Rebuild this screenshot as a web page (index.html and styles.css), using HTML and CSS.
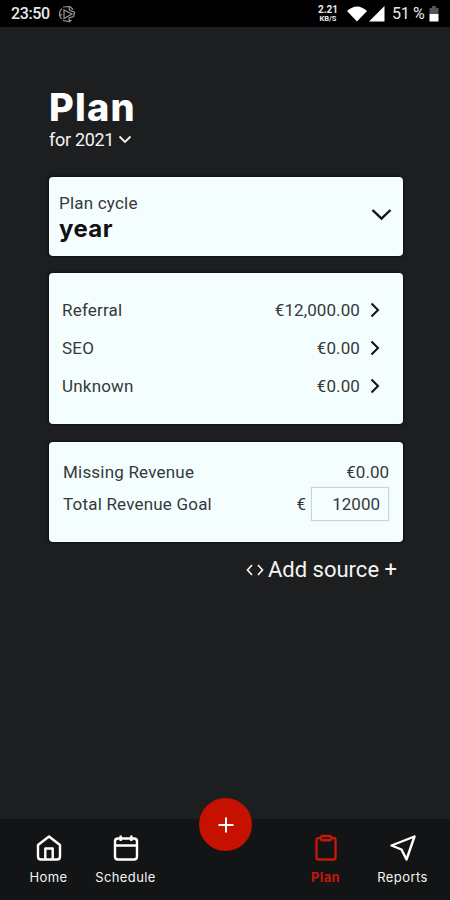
FILE: index.html
```html
<!DOCTYPE html>
<html lang="en">
<head>
  <meta charset="UTF-8" />
  <meta name="viewport" content="width=device-width, initial-scale=1.0"/>
  <title>Plan</title>
  <link rel="stylesheet" href="styles.css">
</head>
<body>
  <div class="app">
    <div class="status-bar">
      <span class="time">23:50</span>
      <svg class="status-app" width="18" height="18" viewBox="0 0 18 18"><path d="M5 2 12 1.500 15 4.500M16.500 7.500 15.500 12M13.500 15 11.500 16.500 5 15.500M3.500 14 1.500 10.500 2 6 4 3.500M6 5V13.500L14 9ZM11 2 11.500 5 17 7.500M1.500 10.500 4 9.500M11.500 16 11 13 15.500 11.500"/></svg>
      <div class="speed"><span>2.21</span><span>KB/S</span></div>
      <svg class="wifi" width="20" height="16" viewBox="0 0 20 16"><path d="M0 5Q10-4 20 5L10 15.500Z"/></svg>
      <svg class="signal" width="16" height="16" viewBox="0 0 16 16"><path d="M15.500 0V15.500H0Z"/></svg>
      <span class="percent">51 %</span>
      <svg class="battery" width="10" height="16" viewBox="0 0 10 16"><path fill="#555" d="M3 0h4v2h2.500v6h-9V2H3z"/><path fill="#fff" d="M.5 8h9v7.500h-9z"/></svg>
    </div>

    <div class="content">
      <h1>Plan</h1>
      <div class="period">
        <span>for 2021</span>
        <svg width="14" height="9" viewBox="0 0 14 9"><path d="M1.500 1.500 7 7 12.500 1.500"/></svg>
      </div>

      <div class="card cycle">
        <div>
          <div class="cycle-label">Plan cycle</div>
          <div class="cycle-value">year</div>
        </div>
        <svg width="21" height="14" viewBox="0 0 21 14"><path d="M1.500 2 10.500 10.500 19.500 2"/></svg>
      </div>

      <div class="card sources">
        <div class="source"><span class="name">Referral</span><span class="amount">€12,000.00</span><svg width="10" height="16" viewBox="0 0 10 16"><path d="M1.500 1.500 8 8 1.500 14.500"/></svg></div>
        <div class="source"><span class="name">SEO</span><span class="amount">€0.00</span><svg width="10" height="16" viewBox="0 0 10 16"><path d="M1.500 1.500 8 8 1.500 14.500"/></svg></div>
        <div class="source"><span class="name">Unknown</span><span class="amount">€0.00</span><svg width="10" height="16" viewBox="0 0 10 16"><path d="M1.500 1.500 8 8 1.500 14.500"/></svg></div>
      </div>

      <div class="card totals">
        <div class="total missing"><span class="name">Missing Revenue</span><span class="sum">€0.00</span></div>
        <div class="total goal"><span class="name">Total Revenue Goal</span><span class="currency">€</span><div class="goal-input">12000</div></div>
      </div>

      <div class="add-source">
        <svg width="18" height="12" viewBox="0 0 18 12"><path d="M6 1 1.500 6 6 11M12 1 16.500 6 12 11"/></svg>
        <span>Add source +</span>
      </div>
    </div>

    <div class="nav">
      <div class="nav-item home">
        <svg width="28" height="28" viewBox="0 0 28 28"><path d="M3 11 14 2.500 25 11V22.500Q25 25.500 22 25.500H6Q3 25.500 3 22.500ZM10.300 25.500V14.500H17.700V25.500"/></svg>
        <span>Home</span>
      </div>
      <div class="nav-item schedule">
        <svg width="28" height="28" viewBox="0 0 28 28"><path d="M6 4.500H22Q25 4.500 25 7.500V22.500Q25 25.500 22 25.500H6Q3 25.500 3 22.500V7.500Q3 4.500 6 4.500ZM3 11.500H25M8.700 1.500V7M19.300 1.500V7"/></svg>
        <span>Schedule</span>
      </div>
      <div class="nav-item plan active">
        <svg width="28" height="28" viewBox="0 0 28 28"><path d="M9 4H6.500Q4.500 4 4.500 6V23.500Q4.500 25.500 6.500 25.500H21.500Q23.500 25.500 23.500 23.500V6Q23.500 4 21.500 4H19M10.500 2H17.500Q19 2 19 3.500V4.700Q19 6.200 17.500 6.200H10.500Q9 6.200 9 4.700V3.500Q9 2 10.500 2Z"/></svg>
        <span>Plan</span>
      </div>
      <div class="nav-item reports">
        <svg width="28" height="28" viewBox="0 0 28 28"><path d="M25.500 2.500 2.500 11.500 12.500 15.500 17.500 25.500Z"/></svg>
        <span>Reports</span>
      </div>
      <div class="add-button">
        <svg width="18" height="18" viewBox="0 0 18 18"><path d="M9 1.500V16.500M1.500 9H16.500"/></svg>
      </div>
    </div>
  </div>
</body>
</html>
```

FILE: styles.css
```css
* {
  box-sizing: border-box;
}
body {
  margin: 0;
  font-family: Roboto, "Liberation Sans", sans-serif;
  background-color: #1c1e1f;
  color: #f4f4f4;
}
svg {
  display: block;
  flex: none;
  fill: none;
}
span {
  white-space: nowrap;
}
.app {
  height: 900px;
  display: flex;
  flex-direction: column;
  overflow: hidden;
}
.status-bar {
  height: 27px;
  flex: none;
  display: flex;
  align-items: center;
  padding: 0 10px 0 11px;
  background: #000;
  font-size: 16px;
  color: #e8e8e8;
}
.time {
  font-weight: 500;
  letter-spacing: -0.4px;
}
.status-app {
  margin-left: 8px;
  stroke: #999;
  stroke-width: 1.2;
}
.speed {
  margin-left: auto;
  width: 20px;
  display: flex;
  flex-direction: column;
  align-items: center;
  font-size: 10px;
  font-weight: bold;
  line-height: 10px;
}
.speed span + span {
  font-size: 7.5px;
  line-height: 8px;
}
.wifi {
  margin-left: 9px;
  fill: #fff;
}
.signal {
  margin-left: 2px;
  fill: #fff;
}
.percent {
  margin-left: 7px;
  width: 33px;
  letter-spacing: -0.3px;
}
.battery {
  margin-left: 4px;
  margin-right: 1px;
}
.speed,
.wifi,
.signal {
  position: relative;
}
.content {
  flex: 1;
  padding: 58px 47px 0 49px;
}
h1 {
  margin: 0;
  font-family: Inter, sans-serif;
  font-size: 38px;
  line-height: 44px;
  font-weight: 800;
  letter-spacing: 1.2px;
  color: #fff;
}
.period {
  display: flex;
  align-items: center;
  gap: 4px;
  height: 21px;
  font-size: 18px;
  letter-spacing: -0.3px;
}
.period svg {
  stroke: #f4f4f4;
  stroke-width: 1.8;
}
.card {
  background: #f5feff;
  color: #35393a;
  border-radius: 4px;
  box-shadow: 0 0 3px #000;
}
.cycle {
  height: 79px;
  margin-top: 27px;
  padding: 0 11px 0 10px;
  display: flex;
  align-items: center;
  justify-content: space-between;
}
.cycle svg {
  margin-bottom: 3px;
  stroke: #111;
  stroke-width: 2.4;
}
.cycle-label {
  font-size: 17px;
  line-height: 24px;
  letter-spacing: 0.2px;
}
.cycle-value {
  font-family: Inter, sans-serif;
  font-size: 24px;
  font-weight: 700;
  line-height: 28px;
  letter-spacing: 0.4px;
  color: #111;
}
.sources {
  height: 151px;
  margin-top: 17px;
  padding: 18px 23px 0 13px;
}
.source {
  height: 38px;
  display: flex;
  align-items: center;
  font-size: 17px;
}
.name {
  letter-spacing: 0.2px;
}
.amount {
  margin-left: auto;
  margin-right: 10px;
  letter-spacing: 0.1px;
}
.source svg {
  stroke: #111;
  stroke-width: 2;
}
.totals {
  height: 100px;
  margin-top: 18px;
  padding: 14px 14px 0;
  font-size: 17px;
}
.total {
  display: flex;
  align-items: center;
}
.missing {
  height: 31px;
}
.goal {
  height: 33px;
}
.sum,
.currency {
  margin-left: auto;
}
.goal-input {
  width: 78px;
  height: 34px;
  margin-left: 5px;
  padding-right: 8px;
  border: 1px solid #cdd4d5;
  box-shadow: 0 0 1px #cdd4d5;
  line-height: 32px;
  text-align: right;
}
.add-source {
  display: flex;
  align-items: center;
  justify-content: flex-end;
  gap: 4px;
  margin-top: 14px;
  padding-right: 6px;
  font-size: 22px;
  line-height: 27px;
}
.add-source svg {
  stroke: #f4f4f4;
  stroke-width: 1.7;
}
.nav {
  position: relative;
  flex: none;
  height: 81px;
  padding: 15px 9px 0 10px;
  display: flex;
  background: #121416;
  font-family: Inter, sans-serif;
  font-size: 13px;
}
.nav-item {
  width: 77px;
  display: flex;
  flex-direction: column;
  align-items: center;
  gap: 7px;
  line-height: 16px;
  letter-spacing: 0.4px;
}
.nav-item svg {
  stroke: #fff;
  stroke-width: 2.4;
  stroke-linejoin: round;
}
.plan {
  margin-left: auto;
}
.active {
  color: #c3180b;
  font-weight: 700;
}
.active svg {
  stroke: #c3180b;
}
.add-button {
  position: absolute;
  left: 199px;
  top: -21px;
  width: 53px;
  height: 53px;
  border-radius: 50%;
  background: #c71100;
  display: flex;
  align-items: center;
  justify-content: center;
}
.add-button svg {
  stroke: #fff;
  stroke-width: 2;
}
```
